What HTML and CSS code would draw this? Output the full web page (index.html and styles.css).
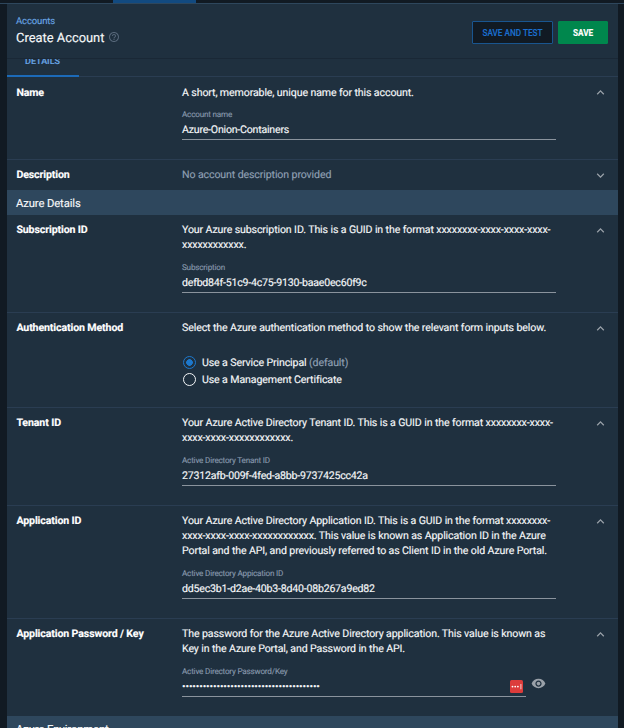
FILE: index.html
```html
<!DOCTYPE html>
<html lang="en">
<head>
<meta charset="utf-8">
<title>Create Account</title>
<link rel="stylesheet" href="styles.css">
</head>
<body>
<svg width="0" height="0" class="defs">
  <symbol id="up" viewBox="0 0 24 24"><path d="M12 8l-6 6 1.41 1.41L12 10.83l4.59 4.58L18 14z"/></symbol>
  <symbol id="down" viewBox="0 0 24 24"><path d="M16.59 8.59L12 13.17 7.41 8.59 6 10l6 6 6-6z"/></symbol>
</svg>
<nav class="topnav"><div class="topnav-active"></div></nav>
<main class="panel">
  <header class="header">
    <div class="titles">
      <a class="crumb">Accounts</a>
      <h1 class="title">Create Account
        <svg class="help" viewBox="0 0 24 24"><path d="M11 18h2v-2h-2v2zm1-16C6.48 2 2 6.48 2 12s4.48 10 10 10 10-4.48 10-10S17.52 2 12 2zm0 18c-4.41 0-8-3.59-8-8s3.59-8 8-8 8 3.59 8 8-3.59 8-8 8zm0-14c-2.21 0-4 1.79-4 4h2c0-1.1.9-2 2-2s2 .9 2 2c0 2-3 1.75-3 5h2c0-2.25 3-2.5 3-5 0-2.21-1.79-4-4-4z"/></svg>
      </h1>
    </div>
    <button class="btn btn-outline">SAVE AND TEST</button>
    <button class="btn btn-save">SAVE</button>
  </header>
  <div class="tabs"><div class="tab"><span class="tab-text">DETAILS</span></div></div>

  <section class="row row-first">
    <h2 class="name">Name</h2>
    <div class="body">
      <p>A short, memorable, unique name for this account.</p>
      <div class="field"><label class="caption">Account name</label><div class="value">Azure-Onion-Containers</div></div>
    </div>
    <svg class="chevron"><use href="#up"/></svg>
  </section>
  <section class="row row-collapsed">
    <h2 class="name">Description</h2>
    <div class="body muted"><p>No account description provided</p></div>
    <svg class="chevron"><use href="#down"/></svg>
  </section>
  <h3 class="band">Azure Details</h3>
  <section class="row">
    <h2 class="name">Subscription ID</h2>
    <div class="body">
      <p>Your Azure subscription ID. This is a GUID in the format xxxxxxxx-xxxx-xxxx-xxxx-<br>xxxxxxxxxxxx.</p>
      <div class="field"><label class="caption">Subscription</label><div class="value">defbd84f-51c9-4c75-9130-baae0ec60f9c</div></div>
    </div>
    <svg class="chevron"><use href="#up"/></svg>
  </section>
  <section class="row">
    <h2 class="name">Authentication Method</h2>
    <div class="body">
      <p>Select the Azure authentication method to show the relevant form inputs below.</p>
      <div class="radios">
        <div class="radio"><i class="dot dot-on"></i><span>Use a Service Principal <span class="muted">(default)</span></span></div>
        <div class="radio"><i class="dot"></i><span>Use a Management Certificate</span></div>
      </div>
    </div>
    <svg class="chevron"><use href="#up"/></svg>
  </section>
  <section class="row">
    <h2 class="name">Tenant ID</h2>
    <div class="body">
      <p>Your Azure Active Directory Tenant ID. This is a GUID in the format xxxxxxxx-xxxx-<br>xxxx-xxxx-xxxxxxxxxxxx.</p>
      <div class="field"><label class="caption">Active Directory Tenant ID</label><div class="value">27312afb-009f-4fed-a8bb-9737425cc42a</div></div>
    </div>
    <svg class="chevron"><use href="#up"/></svg>
  </section>
  <section class="row">
    <h2 class="name">Application ID</h2>
    <div class="body">
      <p>Your Azure Active Directory Application ID. This is a GUID in the format xxxxxxxx-<br>xxxx-xxxx-xxxx-xxxxxxxxxxxx. This value is known as Application ID in the Azure<br>Portal and the API, and previously referred to as Client ID in the old Azure Portal.</p>
      <div class="field"><label class="caption">Active Directory Appication ID</label><div class="value">dd5ec3b1-d2ae-40b3-8d40-08b267a9ed82</div></div>
    </div>
    <svg class="chevron"><use href="#up"/></svg>
  </section>
  <section class="row row-last">
    <h2 class="name">Application Password / Key</h2>
    <div class="body">
      <p>The password for the Azure Active Directory application. This value is known as<br>Key in the Azure Portal, and Password in the API.</p>
      <div class="secret">
        <div class="field"><label class="caption">Active Directory Password/Key</label>
          <div class="value secret-value"><span class="bullets">••••••••••••••••••••••••••••••••••••••••</span>
            <svg class="vault" viewBox="0 0 13 13"><rect width="13" height="13" rx="1.5"/><g fill="#fff"><circle cx="2.5" cy="6.6" r=".9"/><circle cx="5.2" cy="6.6" r=".9"/><circle cx="7.9" cy="6.6" r=".9"/><path d="M10.4 4h1v5.2h-1z" opacity=".75"/></g></svg>
          </div>
        </div>
        <svg class="eye" viewBox="0 0 24 24"><path d="M12 4.5C7 4.5 2.73 7.61 1 12c1.73 4.39 6 7.5 11 7.5s9.27-3.11 11-7.5c-1.73-4.39-6-7.5-11-7.5zM12 17c-2.76 0-5-2.24-5-5s2.24-5 5-5 5 2.24 5 5-2.24 5-5 5zm0-8c-1.66 0-3 1.34-3 3s1.34 3 3 3 3-1.34 3-3-1.34-3-3-3z"/></svg>
      </div>
    </div>
    <svg class="chevron"><use href="#up"/></svg>
  </section>
  <h3 class="band">Azure Environment</h3>
</main>
</body>
</html>
```
FILE: styles.css
```css
* { box-sizing: border-box; }
body {
  margin: 0;
  height: 728px;
  overflow: hidden;
  background: #111a23;
  color: #f4f6f8;
  font: 10.6px/15px Roboto, sans-serif;
  letter-spacing: -0.115px;
  text-rendering: geometricPrecision;
  -webkit-text-stroke: 0.15px currentColor;
}
h1, h2, h3, p { margin: 0; font-size: inherit; font-weight: 400; }
.defs { display: block; position: absolute; }
.topnav { height: 4px; border-bottom: 1px solid #2e475d; padding-left: 113px; }
.topnav-active { width: 83px; height: 3px; background: #124a80; }
.panel { width: 611px; margin-left: 7px; background: #1f303f; }
.header {
  display: flex;
  height: 55px;
  padding: 9px 10px 0 9px;
  border-bottom: 1px solid #1a2836;
}
.titles { flex: 1; }
.crumb { display: block; padding-top: 1px; color: #68a4e3; font-size: 9.5px; }
.title { display: flex; align-items: center; margin-top: 2px; font-size: 12.9px; line-height: 15px; letter-spacing: 0; }
.help { width: 12px; height: 12px; margin: -3px 0 0 4px; fill: #566779; }
.btn {
  height: 23px;
  margin-top: 8px;
  padding: 0;
  border: 1px solid #19558f;
  border-radius: 1px;
  font: 500 8.2px/20px Roboto, sans-serif;
}
.btn-outline { width: 81px; background: #111a23; color: #1b6fce; }
.btn-save { width: 50px; margin-left: 5px; background: #00874d; border-color: #00874d; color: #fff; font-weight: 700; }
.tabs { height: 18px; border-bottom: 1px solid #2a3d52; }
.tab { width: 72px; height: 18px; border-bottom: 2px solid #1c6ab8; overflow: hidden; }
.tab-text { display: block; margin-top: -4px; padding-right: 1px; text-align: center; color: #68a4e3; font-size: 9px; font-weight: 500; letter-spacing: 0; }
.row {
  display: grid;
  grid-template-columns: 166px 374px 1fr;
  padding: 7px 9px 19px;
  border-bottom: 1px solid #2a3d52;
}
.row-first { padding-top: 8px; }
.row-first .field { margin-top: 7px; }
.row-collapsed { height: 30px; padding-top: 7px; padding-bottom: 0; border: 0; }
.row-last { border: 0; }
.name { padding-left: 0.4px; font-weight: 700; color: #fff; }
.body { white-space: nowrap; }
.muted { color: #8e9fb2; }
.chevron { width: 15px; height: 15px; margin: 1px 0 0 37px; fill: #9aa1a9; }
.row-first .chevron { margin-top: 0; }
.band { height: 25px; padding: 6px 9px 4px; background: #2e475d; font-size: 11.25px; }
.field { margin-top: 8px; border-bottom: 1px solid #8a939d; flex: 1; }
.caption { display: block; color: #8495a9; font-size: 8.15px; line-height: 14px; letter-spacing: -0.2px; }
.value { height: 18px; line-height: 18px; letter-spacing: -0.215px; }
.radios { display: grid; gap: 2px; margin-top: 20px; padding-bottom: 1px; }
.radio { display: flex; align-items: center; gap: 6px; padding-left: 1px; }
.dot { width: 13px; height: 13px; border: 1.5px solid #f4f6f8; border-radius: 50%; }
.dot-on { border-color: #1d78cc; background: radial-gradient(circle, #1d78cc 3px, transparent 3.6px); }
.secret { display: flex; }
.secret-value { display: flex; }
.bullets { flex: 1; line-height: 17px; letter-spacing: -0.13px; }
.vault { width: 13px; height: 13px; margin: 2px 3px 0 0; fill: #dc3c3b; }
.eye { width: 15px; height: 15px; margin: 20px 10px 0 5px; fill: #9aa1a9; }
```
